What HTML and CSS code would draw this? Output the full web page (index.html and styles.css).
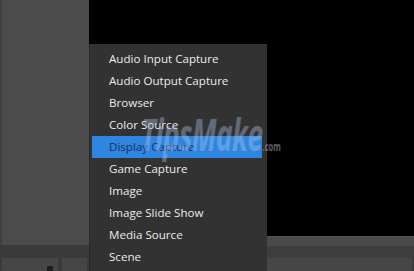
FILE: index.html
```html
<!DOCTYPE html>
<html lang="en">

<head>
    <meta charset="UTF-8">
    <title>Add Source</title>
    <link rel="stylesheet" href="styles.css">
</head>

<body>
    <div class="app">
        <!-- Coluna esquerda: cenas -->
        <div class="col-left">
            <div class="scenes-panel"></div>
            <div class="band"></div>
            <div class="dock-cells">
                <div class="cell cell-wide"><span class="cell-icon"></span></div>
                <div class="cell"></div>
            </div>
        </div>

        <!-- Coluna direita: preview -->
        <div class="col-right">
            <div class="preview"></div>
            <div class="dock-title"></div>
            <div class="band band-right"></div>
            <div class="dock-cells">
                <div class="cell cell-mid"><span class="cell-icon"></span></div>
                <div class="cell"></div>
            </div>
        </div>

        <!-- Menu de contexto -->
        <ul class="context-menu">
            <li>Audio Input Capture</li>
            <li>Audio Output Capture</li>
            <li>Browser</li>
            <li>Color Source</li>
            <li class="selected">Display Capture</li>
            <li>Game Capture</li>
            <li>Image</li>
            <li>Image Slide Show</li>
            <li>Media Source</li>
            <li>Scene</li>
        </ul>

        <div class="watermark">TipsMake<span>.com</span></div>
    </div>
</body>

</html>
```

FILE: styles.css
```css
body {
    margin: 0;
    padding: 0;
    background-color: #000;
    overflow: hidden;
    font-family: "Open Sans", "Noto Sans", sans-serif;
}

.app {
    position: relative;
    width: 414px;
    height: 271px;
    display: flex;
    overflow: hidden;
}

.col-left {
    width: 89px;
    display: flex;
    flex-direction: column;
    background: #3a3a3a;
}

.col-right {
    flex: 1;
    display: flex;
    flex-direction: column;
    background: #3a3a3a;
}

.scenes-panel {
    height: 245px;
    background: #4b4b4b;
    border-left: 2px solid #3f3f3f;
    box-sizing: border-box;
}

.band {
    height: 13px;
    background: #3a3a3a;
}

.preview {
    height: 236px;
    background: #000;
}

.dock-title {
    height: 10px;
    background: #4a4a4a;
    border-top: 1px solid #555;
    box-sizing: border-box;
}

.band-right {
    height: 12px;
    background: #3d3d3d;
}

.dock-cells {
    flex: 1;
    display: flex;
    gap: 4px;
    padding: 0 2px;
}

.cell {
    flex: 1;
    background: #464646;
    position: relative;
}

.cell-wide {
    flex: 0 0 56px;
}

.cell-mid {
    flex: 0 0 46px;
}

.cell-icon {
    position: absolute;
    right: 5px;
    top: 8px;
    width: 6px;
    height: 5px;
    background: #1e1e1e;
}

/* Menu */
.context-menu {
    position: absolute;
    left: 89px;
    top: 44px;
    width: 178px;
    height: 240px;
    margin: 0;
    padding: 4px 5px 0 2px;
    box-sizing: border-box;
    list-style: none;
    background: #323232;
    border-left: 1px solid #2a2a2a;
}

.context-menu li {
    height: 22px;
    line-height: 22px;
    padding-left: 17px;
    font-size: 11.6px;
    color: #ececec;
    white-space: nowrap;
}

.context-menu li.selected {
    background: #2e86e0;
    color: #1b2f63;
}

/* marca d'agua por cima do menu */
.watermark {
    position: absolute;
    left: 141px;
    top: 104px;
    font-size: 44px;
    font-weight: bold;
    font-style: italic;
    letter-spacing: -1px;
    color: rgba(150, 180, 230, 0.2);
    text-shadow: 0 0 1px rgba(200, 215, 240, 0.25);
    transform: scaleX(0.64);
    transform-origin: left top;
    white-space: nowrap;
    pointer-events: none;
}

.watermark span {
    font-size: 12px;
    font-style: normal;
    letter-spacing: 0;
    color: rgba(160, 160, 160, 0.4);
}
```
